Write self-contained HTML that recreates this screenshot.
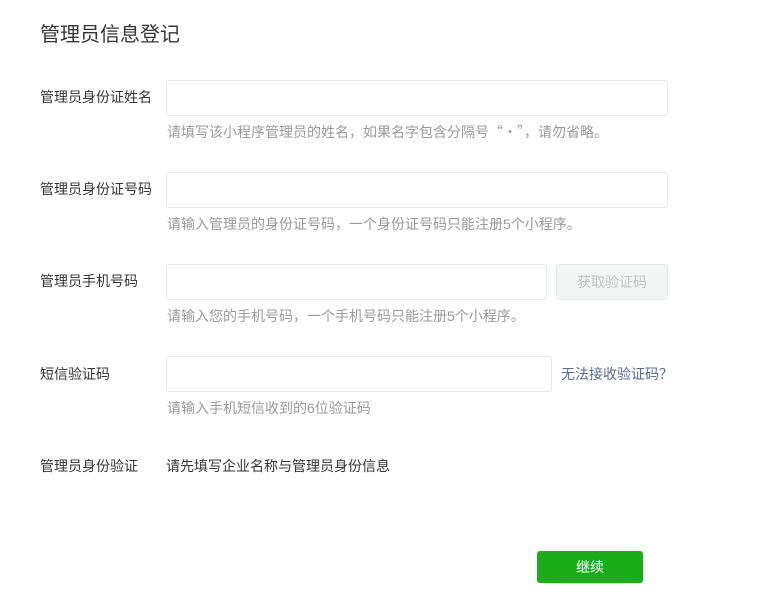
<!DOCTYPE html>
<html><head><meta charset="utf-8"><style>
*{margin:0;padding:0;box-sizing:border-box}
body{width:771px;height:610px;background:#fff;font-family:"Liberation Sans","Noto Sans CJK SC",sans-serif;color:#353535;position:relative;overflow:hidden}
.a{position:absolute;white-space:nowrap}
.c{font-family:"Noto Sans CJK SC",sans-serif}
.t{left:40px;top:21px;font-size:20px;line-height:28px;color:#353535}
.l{left:40px;font-size:14px;line-height:20px;color:#353535}
.in{position:absolute;left:166px;height:36px;border:1px solid #e4e8eb;border-radius:3px;background:#fff}
.h{left:167px;font-size:14px;line-height:20px;color:#9a9a9a}
</style></head><body>
<div class="a t">管理员信息登记</div>

<div class="a l" style="top:87px">管理员身份证姓名</div>
<div class="in" style="top:80px;width:502px"></div>
<div class="a h" style="top:122px">请填写该小程序管理员的姓名<span class="c">，</span>如果名字包含分隔号<span class="c">“·”，</span>请勿省略<span class="c">。</span></div>

<div class="a l" style="top:179px">管理员身份证号码</div>
<div class="in" style="top:172px;width:502px"></div>
<div class="a h" style="top:214px">请输入管理员的身份证号码<span class="c">，</span>一个身份证号码只能注册5个小程序<span class="c">。</span></div>

<div class="a l" style="top:271px">管理员手机号码</div>
<div class="in" style="top:264px;width:381px"></div>
<div class="a" style="left:556px;top:264px;width:112px;height:36px;border:1px solid #e4e8eb;border-radius:3px;background:#f4f5f5;color:#c2c2c2;font-size:14px;line-height:34px;text-align:center">获取验证码</div>
<div class="a h" style="top:306px">请输入您的手机号码<span class="c">，</span>一个手机号码只能注册5个小程序<span class="c">。</span></div>

<div class="a l" style="top:364px">短信验证码</div>
<div class="in" style="top:356px;width:386px"></div>
<div class="a" style="left:561px;top:364px;font-size:14px;line-height:20px;color:#576b95">无法接收验证码<span class="c">？</span></div>
<div class="a h" style="top:398px">请输入手机短信收到的6位验证码</div>

<div class="a l" style="top:456px">管理员身份验证</div>
<div class="a" style="left:166px;top:456px;font-size:14px;line-height:20px;color:#353535">请先填写企业名称与管理员身份信息</div>

<div class="a" style="left:537px;top:551px;width:106px;height:32px;background:#1aad19;border-radius:3px;color:#fff;font-size:14px;line-height:32px;text-align:center">继续</div>
</body></html>
